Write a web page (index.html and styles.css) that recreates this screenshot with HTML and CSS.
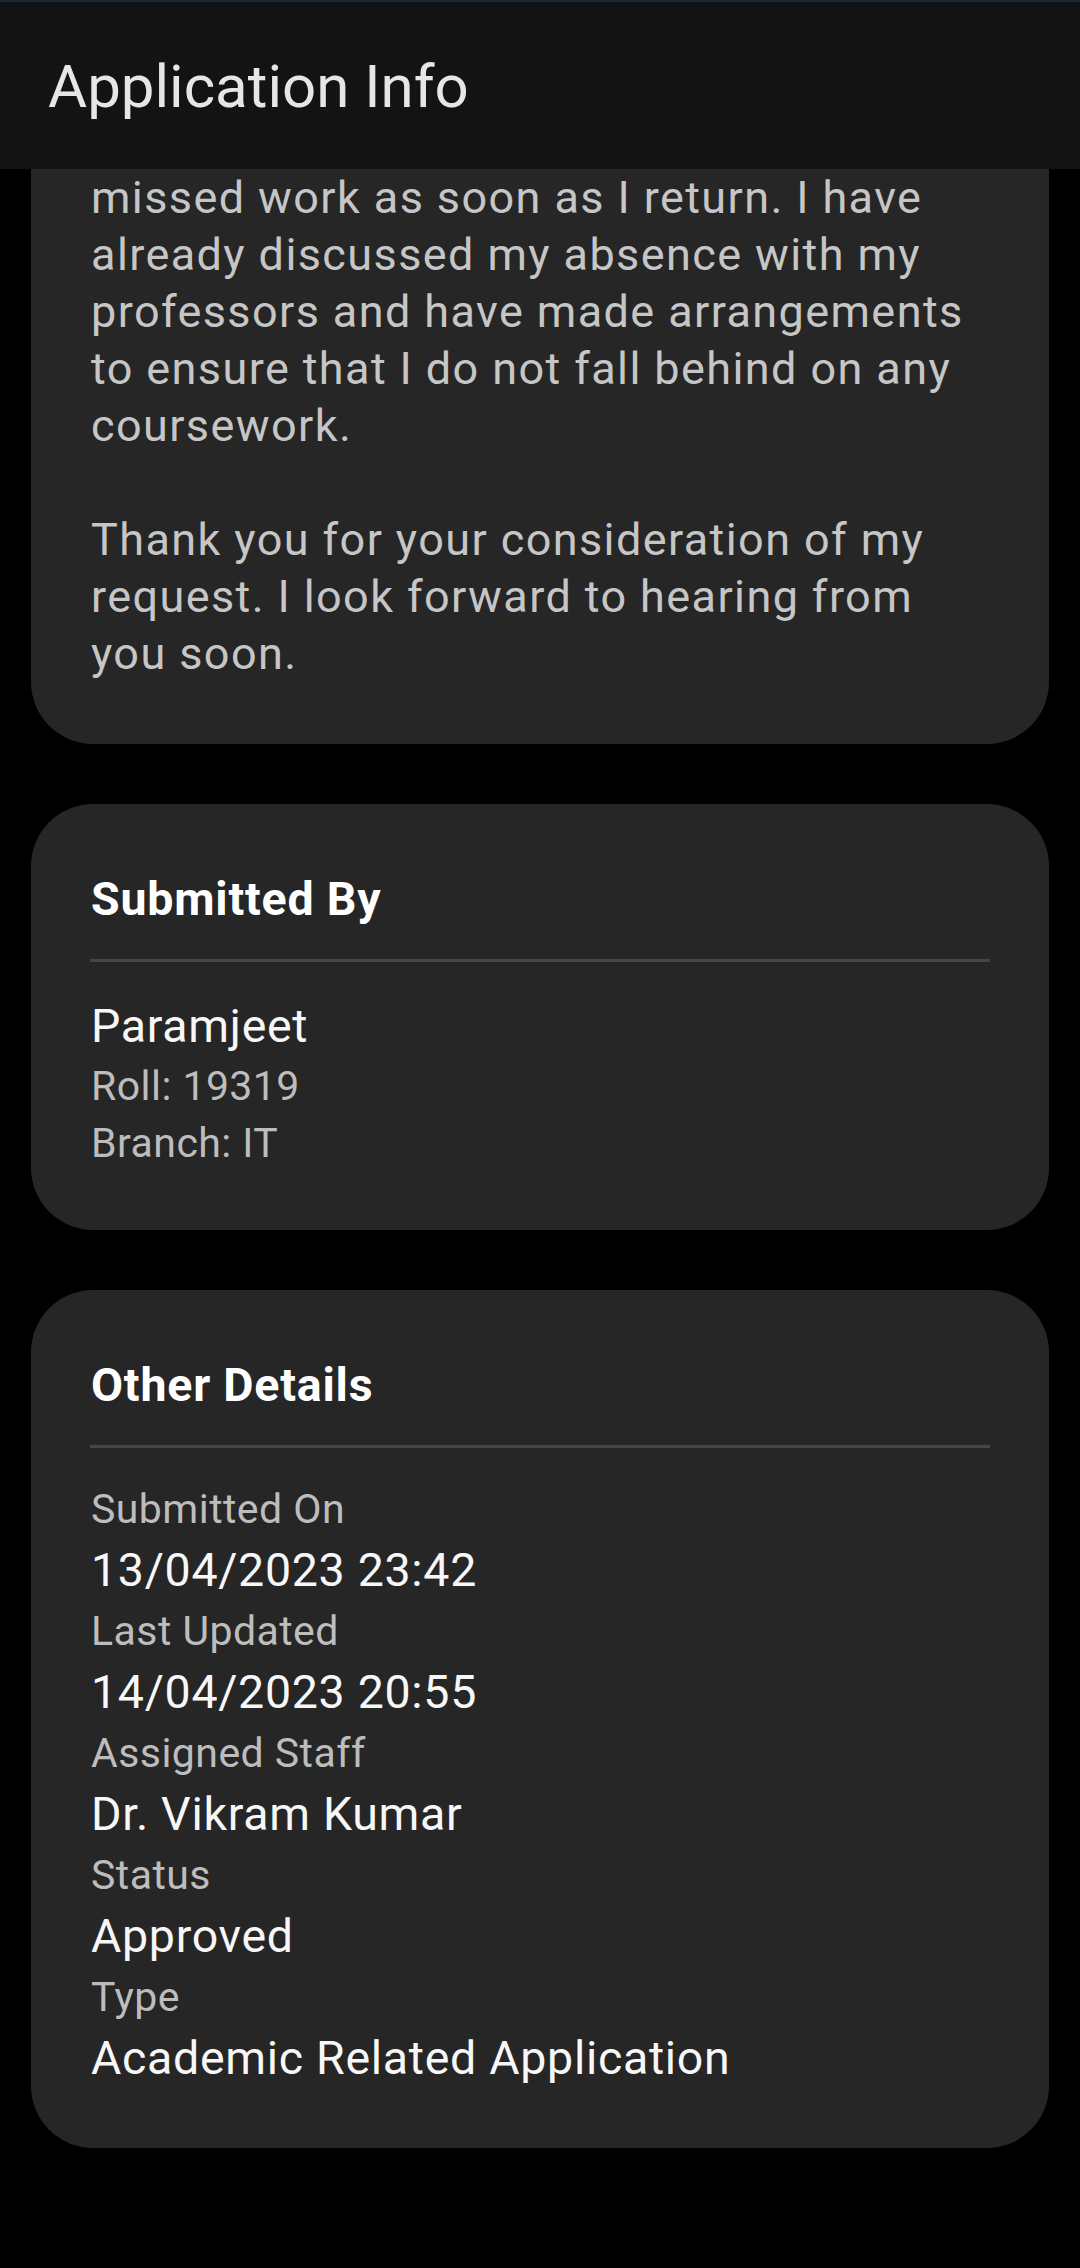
FILE: index.html
```html
<!DOCTYPE html>
<html lang="en">
<head>
<meta charset="utf-8">
<title>Application Info</title>
<link rel="stylesheet" href="styles.css">
</head>
<body>
<div class="app">
  <div class="statusline"></div>
  <header class="appbar">
    <h1 class="appbar-title">Application Info</h1>
  </header>
  <main class="content">
    <section class="card card-body">
      <p class="body-text">missed work as soon as I return. I have already discussed my absence with my professors and have made arrangements to ensure that I do not fall behind on any coursework.</p>
      <p class="body-text">Thank you for your consideration of my request. I look forward to hearing from you soon.</p>
    </section>

    <section class="card">
      <h2 class="card-title">Submitted By</h2>
      <div class="divider"></div>
      <div class="name">Paramjeet</div>
      <div class="meta">Roll: 19319</div>
      <div class="meta">Branch: IT</div>
    </section>

    <section class="card">
      <h2 class="card-title">Other Details</h2>
      <div class="divider"></div>
      <dl class="details">
        <dt class="label">Submitted On</dt>
        <dd class="value">13/04/2023 23:42</dd>
        <dt class="label">Last Updated</dt>
        <dd class="value">14/04/2023 20:55</dd>
        <dt class="label">Assigned Staff</dt>
        <dd class="value">Dr. Vikram Kumar</dd>
        <dt class="label">Status</dt>
        <dd class="value">Approved</dd>
        <dt class="label">Type</dt>
        <dd class="value">Academic Related Application</dd>
      </dl>
    </section>
  </main>
</div>
</body>
</html>
```

FILE: styles.css
```css
html, body {
  margin: 0;
  padding: 0;
  background: #000;
}

body {
  font-family: Roboto, "Liberation Sans", Arial, sans-serif;
  color: #fff;
  width: 1080px;
  min-height: 2268px;
}

.app {
  display: flex;
  flex-direction: column;
}

.statusline {
  height: 4px;
  background: linear-gradient(#1d2830 0, #1d2830 2px, #0f1317 2px, #0f1317 4px);
}

.appbar {
  height: 165px;
  background: #131313;
  display: flex;
  align-items: center;
  padding: 0 0 0 48px;
}

.appbar-title {
  margin: 0;
  font-size: 60px;
  font-weight: 400;
  color: #e6e6e6;
  line-height: 71px;
}

.content {
  display: flex;
  flex-direction: column;
  gap: 60px;
  padding: 0 31px;
}

.card {
  background: #262626;
  border-radius: 62px;
  padding: 67px 59px 58px 60px;
}

.card-body {
  border-radius: 0 0 62px 62px;
  padding-top: 0;
  padding-bottom: 62px;
}

.body-text {
  margin: 0 10px 57px 0;
  font-size: 45px;
  line-height: 57px;
  letter-spacing: 1.4px;
  color: #c6c6c6;
}

.body-text:last-child {
  margin-bottom: 0;
}

.card-title {
  margin: 0;
  font-size: 46.5px;
  font-weight: 700;
  line-height: 56px;
  letter-spacing: 0.8px;
  color: #fff;
}

.divider {
  height: 3px;
  background: #464646;
  margin: 32px 0 32px -1px;
}

.name {
  font-size: 46.5px;
  line-height: 64px;
  letter-spacing: 0.7px;
  color: #f7f7f7;
}

.meta {
  font-size: 41px;
  line-height: 57px;
  letter-spacing: 0.45px;
  color: #bdbdbd;
}

.details {
  margin: 0;
  display: flex;
  flex-direction: column;
}

.label {
  font-size: 41px;
  line-height: 58px;
  letter-spacing: 0.45px;
  color: #bdbdbd;
}

.value {
  margin: 0;
  font-size: 46.5px;
  line-height: 64px;
  letter-spacing: 0.7px;
  color: #f7f7f7;
}
```
